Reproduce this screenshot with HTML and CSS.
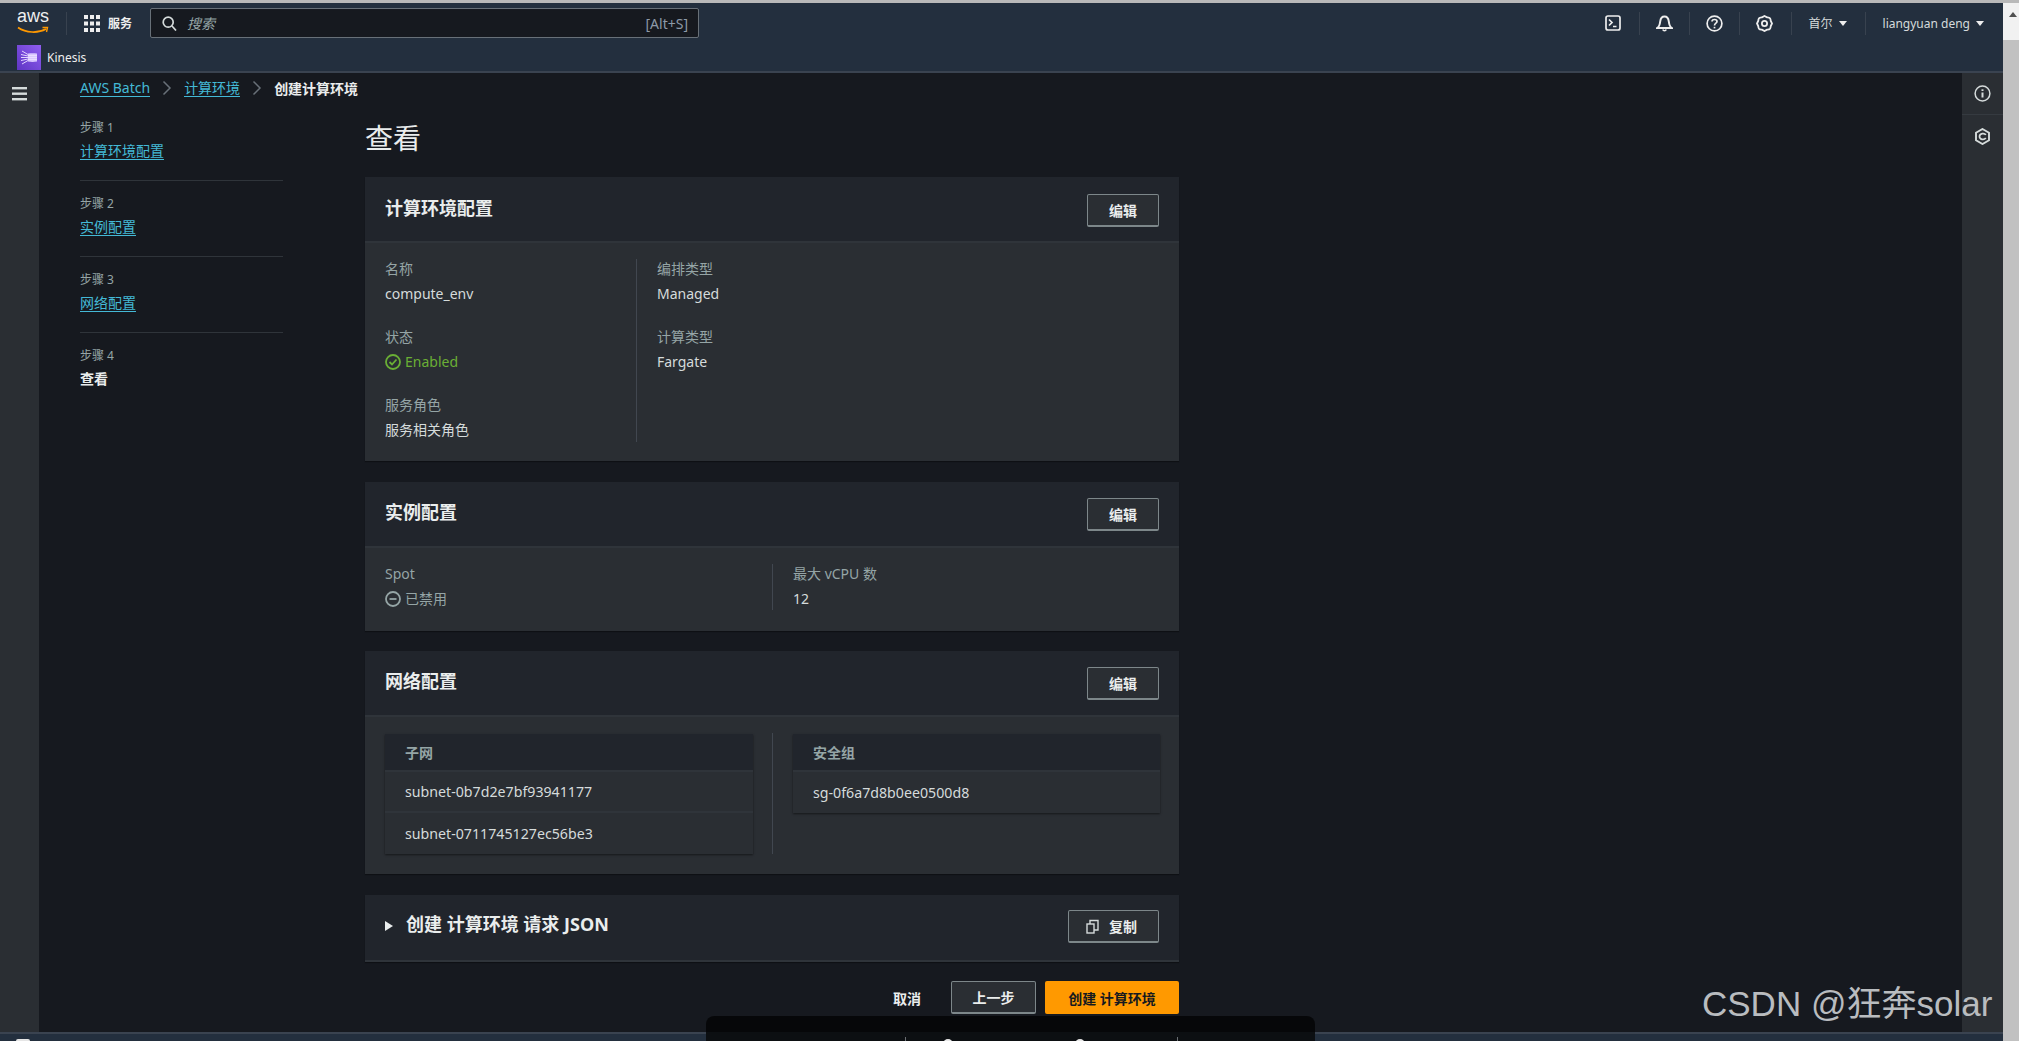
FILE: index.html
```html
<!DOCTYPE html>
<html lang="zh">
<head>
<meta charset="utf-8">
<title>创建计算环境</title>
<link rel="stylesheet" href="styles.css">
</head>
<body>
<div class="page">
  <div class="app">
    <header class="topbar">
      <div class="nav-row">
        <div class="aws-logo">
          <span class="aws-word">aws</span>
          <svg class="aws-smile" width="32" height="8" viewBox="0 0 32 8"><path d="M1 1.500C9 7 21 7.500 29 3" fill="none" stroke="#f90" stroke-width="1.700"/><path d="M25.500 1.500L30.500 1.500L29.500 6" fill="none" stroke="#f90" stroke-width="1.400"/></svg>
        </div>
        <span class="vsep first"></span>
        <svg class="grid-icon" width="16" height="17" viewBox="0 0 16 17" fill="#eee"><rect x="0" y="0" width="4" height="4"/><rect x="6" y="0" width="4" height="4"/><rect x="12" y="0" width="4" height="4"/><rect x="0" y="6.500" width="4" height="4"/><rect x="6" y="6.500" width="4" height="4"/><rect x="12" y="6.500" width="4" height="4"/><rect x="0" y="13" width="4" height="4"/><rect x="6" y="13" width="4" height="4"/><rect x="12" y="13" width="4" height="4"/></svg>
        <span class="services">服务</span>
        <div class="search">
          <svg width="15" height="15" viewBox="0 0 15 15" fill="none" stroke="#d5dbdb" stroke-width="1.700"><circle cx="6.200" cy="6.200" r="5"/><path d="M10 10L14 14.500"/></svg>
          <span class="search-hint">搜索</span>
          <span class="search-key">[Alt+S]</span>
        </div>
        <div class="nav-right">
          <svg class="nav-icon nav-term" width="16" height="16" viewBox="0 0 16 16" fill="none" stroke="#eee" stroke-width="1.700"><rect x="1" y="1" width="14" height="14" rx="2"/><path d="M4 4.500L7 7.500L4 10.500M8 11.500H11.500"/></svg>
          <span class="vsep"></span>
          <svg class="nav-icon" width="17" height="17" viewBox="0 0 17 17" fill="none" stroke="#eee" stroke-width="2"><path d="M1.200 13H15.800C13.500 11.500 13.200 10 12.800 6.500C12.400 3.200 10.500 1.500 8.500 1.500S4.600 3.200 4.200 6.500C3.800 10 3.500 11.500 1.200 13Z"/><path d="M6.800 14.500C7.200 16 9.800 16 10.200 14.500" stroke-width="1.500"/></svg>
          <span class="vsep"></span>
          <svg class="nav-icon" width="17" height="17" viewBox="0 0 17 17" fill="none" stroke="#eee" stroke-width="1.700"><circle cx="8.500" cy="8.500" r="7.400"/><path d="M6 6.500C6 3.800 11 3.800 11 6.500C11 8.300 8.500 8 8.500 10.500"/><path d="M8.500 11.800V13.400"/></svg>
          <span class="vsep"></span>
          <svg class="nav-icon" width="17" height="17" viewBox="0 0 17 17" fill="none" stroke="#eee"><path d="M8.500 1L11 2.400C12.200 2.300 13.700 2.800 14.200 3.600C14.600 4.300 14.700 5 14.700 5.700L16 8.500L14.700 11.300C14.700 12 14.600 12.700 14.200 13.400C13.700 14.200 12.200 14.700 11 14.600L8.500 16L6 14.600C4.800 14.700 3.300 14.200 2.800 13.400C2.400 12.700 2.300 12 2.300 11.300L1 8.500L2.300 5.700C2.300 5 2.400 4.300 2.800 3.600C3.300 2.800 4.800 2.300 6 2.400Z" stroke-width="1.800"/><circle cx="8.500" cy="8.500" r="2.600" stroke-width="1.800"/></svg>
          <span class="vsep wide"></span>
          <span class="nav-menu">首尔<i class="caret"></i></span>
          <span class="vsep wide"></span>
          <span class="nav-menu">liangyuan deng<i class="caret"></i></span>
        </div>
      </div>
      <div class="fav-row">
        <span class="kinesis-logo">
          <svg width="24" height="25" viewBox="0 0 24 25" fill="none" stroke="#e4d6ff" stroke-width="1"><path d="M5 6L11 9.500M4 9.500L11 11M4 12.500H11M4 15.500L11 14M5 19L11 15.500"/><path d="M11 8.500C14 8 17 8 20 8.500V16.500C17 17 14 17 11 16.500Z" fill="#d9c6ff" stroke="none"/><path d="M11 10.500H20M11 12.500H20M11 14.500H20" stroke="#f3ecff" stroke-width=".6"/></svg>
        </span>
        <span class="kinesis-name">Kinesis</span>
      </div>
    </header>

    <div class="workspace">
      <aside class="rail">
        <svg width="15" height="14" viewBox="0 0 15 14" fill="#d5dbdb"><rect y="0" width="15" height="2.400"/><rect y="5.500" width="15" height="2.400"/><rect y="11" width="15" height="2.400"/></svg>
      </aside>

      <main class="content">
        <nav class="crumbs">
          <a class="link">AWS Batch</a>
          <svg width="10" height="16" viewBox="0 0 10 16" fill="none" stroke="#687078" stroke-width="1.500"><path d="M1.500 1.500L8 8L1.500 14.500"/></svg>
          <a class="link">计算环境</a>
          <svg width="10" height="16" viewBox="0 0 10 16" fill="none" stroke="#687078" stroke-width="1.500"><path d="M1.500 1.500L8 8L1.500 14.500"/></svg>
          <b class="crumb-now">创建计算环境</b>
        </nav>

        <div class="wizard">
          <ol class="steps">
            <li class="step"><span class="step-no">步骤 1</span><a class="link step-link">计算环境配置</a></li>
            <li class="step"><span class="step-no">步骤 2</span><a class="link step-link">实例配置</a></li>
            <li class="step"><span class="step-no">步骤 3</span><a class="link step-link">网络配置</a></li>
            <li class="step"><span class="step-no">步骤 4</span><b class="step-now">查看</b></li>
          </ol>

          <section class="review">
            <h1 class="page-title">查看</h1>

            <div class="card card-env">
              <div class="card-head"><h2>计算环境配置</h2><button class="btn">编辑</button></div>
              <div class="card-body env-body">
                <div class="col col-env-l">
                  <div class="kv"><span class="key">名称</span><span class="val">compute_env</span></div>
                  <div class="kv"><span class="key">状态</span><span class="val ok"><svg width="16" height="16" viewBox="0 0 16 16" fill="none" stroke="#6aaf35" stroke-width="1.800"><circle cx="8" cy="8" r="7"/><path d="M4.500 8L7 10.500L11.500 5.500"/></svg>Enabled</span></div>
                  <div class="kv"><span class="key">服务角色</span><span class="val">服务相关角色</span></div>
                </div>
                <div class="col col-env-r">
                  <div class="kv"><span class="key">编排类型</span><span class="val">Managed</span></div>
                  <div class="kv"><span class="key">计算类型</span><span class="val">Fargate</span></div>
                </div>
              </div>
            </div>

            <div class="card card-inst">
              <div class="card-head head-up"><h2>实例配置</h2><button class="btn">编辑</button></div>
              <div class="card-body split inst-body">
                <div class="col">
                  <div class="kv kv-auto"><span class="key">Spot</span><span class="val muted"><svg width="16" height="16" viewBox="0 0 16 16" fill="none" stroke="#95a5a6" stroke-width="1.800"><circle cx="8" cy="8" r="7"/><path d="M4.500 8H11.500"/></svg>已禁用</span></div>
                </div>
                <div class="col col-div">
                  <div class="kv kv-auto"><span class="key">最大 vCPU 数</span><span class="val">12</span></div>
                </div>
              </div>
            </div>

            <div class="card card-net">
              <div class="card-head head-up"><h2>网络配置</h2><button class="btn">编辑</button></div>
              <div class="card-body split net-body">
                <div class="col net-left">
                  <div class="mini">
                    <div class="mini-head">子网</div>
                    <div class="mini-row">subnet-0b7d2e7bf93941177</div>
                    <div class="mini-row">subnet-0711745127ec56be3</div>
                  </div>
                </div>
                <div class="col col-div">
                  <div class="mini">
                    <div class="mini-head">安全组</div>
                    <div class="mini-row">sg-0f6a7d8b0ee0500d8</div>
                  </div>
                </div>
              </div>
            </div>

            <div class="card card-json">
              <div class="card-head json-head">
                <h2><i class="tri"></i>创建 计算环境 请求 JSON</h2>
                <button class="btn btn-copy"><svg width="13" height="15" viewBox="0 0 13 15" fill="none" stroke="#d5dbdb" stroke-width="1.400"><rect x="1" y="5" width="7" height="9"/><path d="M4 5V1.500H12V11H8"/></svg>复制</button>
              </div>
            </div>

            <div class="actions">
              <span class="cancel">取消</span>
              <button class="btn btn-prev">上一步</button>
              <button class="btn-primary">创建 计算环境</button>
            </div>
          </section>
        </div>
      </main>

      <aside class="rail rail-right">
        <span class="rail-tool">
          <svg width="17" height="17" viewBox="0 0 17 17" fill="none" stroke="#d5dbdb" stroke-width="1.500"><circle cx="8.500" cy="8.500" r="7.400"/><path d="M8.500 7.500V12.500" stroke-width="2"/><path d="M8.500 4.300V6" stroke-width="2"/></svg>
        </span>
        <span class="rail-tool">
          <svg width="15" height="17" viewBox="0 0 15 17" fill="none" stroke="#d5dbdb" stroke-width="1.900"><path d="M7.500 1L14 4.700V12.300L7.500 16L1 12.300V4.700Z"/><path d="M10.800 7C9.800 4.800 4.500 5 4.500 8.500C4.500 11.500 9 12.500 10.800 10" stroke-width="1.700"/></svg>
        </span>
      </aside>
    </div>
    <footer class="bottombar"><span class="foot-glimpse"></span></footer>
  </div>

  <div class="scrollbar"><span class="scroll-up"></span><span class="scroll-thumb"></span></div>
</div>

<div class="share-bar">
  <span class="share-sep"></span>
  <span class="share-dot dot-one"></span>
  <span class="share-dot dot-two"></span>
  <span class="share-sep sep-two"></span>
</div>
<div class="watermark">CSDN @狂奔solar</div>
</body>
</html>
```

FILE: styles.css
```css
* { box-sizing: border-box; }
html, body { margin: 0; height: 100%; overflow: hidden; background: #16191f; }
body {
  font-family: "Noto Sans", "Noto Sans CJK SC", sans-serif;
  font-size: 14px;
  color: #d5dbdb;
}
h1, h2, ol { margin: 0; padding: 0; }
ol { list-style: none; }

.page { display: flex; height: 1041px; border-top: 3px solid #b9b9b9; }
.app { flex: 1; min-width: 0; display: flex; flex-direction: column; }

.topbar { height: 70px; flex: none; background: #232f3e; border-bottom: 2px solid #3a4350; }
.nav-row { height: 40px; display: flex; align-items: center; padding-left: 17px; padding-right: 19px; }
.aws-logo { width: 32px; height: 24px; display: flex; flex-direction: column; }
.aws-word { display: block; margin-top: -1px; font: 18px/13px "Liberation Sans", sans-serif; color: #eee; }
.aws-smile { margin-top: 3px; flex: none; }
.vsep { width: 1px; height: 23px; background: #38424f; flex: none; }
.vsep.first { margin-left: 17px; margin-right: 17px; }
.services { margin-left: 8px; font-size: 12px; font-weight: 700; color: #eee; }
.search {
  margin-left: 18px; width: 549px; height: 30px;
  display: flex; align-items: center; padding: 0 10px 0 11px;
  background: #16191f; border: 1px solid #687078; border-radius: 2px;
}
.search-hint { margin-left: 10px; font-style: italic; font-size: 14px; color: #95a5a6; }
.search-key { margin-left: auto; font-size: 14px; color: #8d99a8; }
.nav-right { margin-left: auto; display: flex; align-items: center; }
.nav-right .vsep { margin: 0 16px; }
.nav-right .vsep.wide { margin: 0 17px 0 18px; }
.nav-icon { flex: none; }
.nav-term { margin-right: 2px; }
.nav-menu { font-size: 12px; color: #d5dbdb; display: inline-flex; align-items: center; }
.caret { margin-left: 6px; width: 0; height: 0; border: 4px solid transparent; border-top: 5px solid #eee; border-bottom: 0; }

.fav-row { height: 28px; display: flex; align-items: center; padding-left: 17px; }
.kinesis-logo { width: 24px; height: 25px; display: flex; background: linear-gradient(45deg, #5f35c4, #8f5ef0); }
.kinesis-name { margin-left: 6px; font-size: 12px; color: #eee; }

.workspace { flex: 1; min-height: 0; display: flex; }
.rail { width: 39px; flex: none; background: #2a2e33; display: flex; justify-content: center; padding-top: 14px; }
.rail-right { width: 41px; flex-direction: column; justify-content: flex-start; padding-top: 0; }
.rail-tool { height: 42px; display: flex; align-items: center; justify-content: center; }
.rail-tool:first-child { border-bottom: 1px solid #353a40; }

.content { flex: 1; min-width: 0; padding-left: 41px; }
.crumbs { height: 32px; display: flex; align-items: center; gap: 12px; font-size: 14px; padding-bottom: 2px; }
.link { color: #44b9d6; border-bottom: 1px solid #44b9d6; line-height: 17px; }
.crumb-now { font-size: 14px; font-weight: 700; color: #eaeded; }

.wizard { display: flex; }
.steps { width: 203px; flex: none; }
.step { height: 76px; padding-top: 14px; display: flex; flex-direction: column; align-items: flex-start; border-bottom: 1px solid #2f343a; }
.step:last-child { border-bottom: 0; }
.step-no { font-size: 12px; line-height: 18px; color: #95a5a6; margin-bottom: 5px; }
.step-link { font-size: 14px; }
.step-now { font-size: 14px; color: #eaeded; line-height: 18px; }

.review { width: 814px; margin-left: 82px; }
.page-title { font-size: 28px; font-weight: 400; line-height: 36px; color: #eaeded; margin-top: 15px; margin-bottom: 21px; }

.card { background: #2a2e33; box-shadow: 0 1px 1px rgba(0,0,0,.35); margin-bottom: 20px; }
.card-env, .card-net { margin-bottom: 21px; }
.card-head { height: 66px; padding: 3px 20px 0; background: #21252c; border-bottom: 2px solid #2f343a; display: flex; align-items: center; justify-content: space-between; }
.card-head.head-up { padding-top: 1px; }
.card-head h2 { font-size: 18px; font-weight: 700; color: #eaeded; line-height: 24px; margin-top: -5px; }
.btn {
  height: 33px; padding: 0 21px; background: #2a2e33; color: #eaeded;
  border: 1px solid #7d878a; border-bottom-width: 2px; border-radius: 2px;
  font: 700 14px "Noto Sans", "Noto Sans CJK SC", sans-serif;
}
.card-body { padding: 16px 20px; }
.env-body { display: flex; height: 218px; padding-bottom: 19px; }
.col-env-l { width: 252px; border-right: 1px solid #414750; }
.col-env-r { padding-left: 20px; }
.kv { display: flex; flex-direction: column; height: 68px; }
.kv-auto { height: auto; }
.key { font-size: 14px; line-height: 20px; color: #95a5a6; margin-bottom: 5px; }
.val { font-size: 14px; line-height: 20px; color: #d5dbdb; display: flex; align-items: center; gap: 4px; }
.ok { color: #6aaf35; }
.muted { color: #95a5a6; }

.split { display: grid; grid-template-columns: 1fr 1fr; }
.col-div { border-left: 1px solid #414750; padding-left: 20px; }
.split > .col:first-child { padding-right: 19px; }
.split > .net-left { padding-left: 1px; }
.inst-body { height: 83px; padding-bottom: 21px; }

.net-body { padding: 16px 19px 20px; height: 157px; }
.mini { margin-top: 1px; background: #2a2e33; box-shadow: 0 1px 2px rgba(0,0,0,.5); }
.mini-head { height: 38px; background: #21252c; border-bottom: 2px solid #2f343a; display: flex; align-items: center; padding-left: 20px; font-size: 14px; font-weight: 700; color: #95a5a6; }
.mini-row { height: 41px; display: flex; align-items: center; padding-left: 20px; font-size: 14.200px; color: #d5dbdb; border-bottom: 2px solid #2f343a; }
.mini-row:last-child { border-bottom: 0; }

.card-json { background: #21252c; margin-bottom: 19px; }
.card-head.json-head { height: 67px; padding-top: 0; padding-bottom: 2px; }
.tri { display: inline-block; margin-right: 13px; width: 0; height: 0; border: 5px solid transparent; border-left: 8px solid #eaeded; border-right: 0; }
.btn-copy { display: inline-flex; align-items: center; gap: 10px; padding: 0 21px 0 17px; }

.actions { display: flex; justify-content: flex-end; align-items: center; height: 33px; }
.cancel { font-size: 14px; font-weight: 700; color: #eaeded; margin-right: 30px; }
.btn-prev { padding: 0; width: 85px; margin-right: 9px; }
.btn-primary {
  height: 33px; width: 134px; background: #ff9900; border: 0; border-radius: 2px;
  color: #16191f; font: 700 14px "Noto Sans", "Noto Sans CJK SC", sans-serif;
}

.bottombar { height: 9px; flex: none; padding-left: 16px; padding-top: 5px; background: #232f3e; border-top: 2px solid #3a4350; overflow: hidden; }
.foot-glimpse { display: block; width: 14px; height: 6px; background: #e6e6e6; border-radius: 2px 2px 0 0; }

.scrollbar { width: 16px; flex: none; background: #f1f1f1; display: flex; flex-direction: column; align-items: center; }
.scroll-up { margin-top: 9px; margin-left: 3px; width: 0; height: 0; border: 4px solid transparent; border-bottom: 5px solid #505050; border-top: 0; }
.scroll-thumb { margin-top: 23px; width: 100%; flex: 1; background: #c1c1c1; }

.share-bar {
  position: absolute; left: 706px; top: 1016px; width: 609px; height: 25px; padding: 21px 0 0 199px;
  display: flex; align-items: flex-start;
  background: linear-gradient(#060709 64%, #0c0f12 64%); border-radius: 8px 8px 0 0; overflow: hidden;
}
.share-sep { flex: none; width: 1px; height: 4px; background: #6a6e72; }
.share-dot { flex: none; width: 10px; height: 10px; margin-top: 2px; border-radius: 50%; background: #e8e8e8; }
.dot-one { margin-left: 37px; }
.dot-two { margin-left: 122px; }
.sep-two { margin-left: 92px; }
.watermark { position: absolute; left: 1702px; top: 982px; font: 35px/44px "Liberation Sans", "Noto Sans CJK SC", sans-serif; color: #b9bcbf; white-space: nowrap; }
```
